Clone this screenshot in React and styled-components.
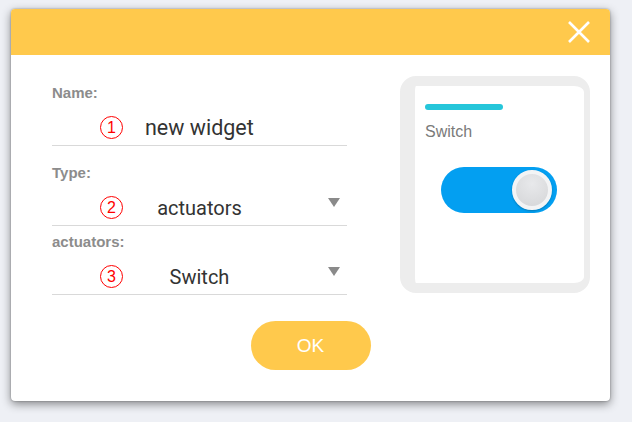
import styled, { createGlobalStyle } from 'styled-components'

const Global = createGlobalStyle`
  html, body {
    margin: 0;
    padding: 0;
    background: #eef0f5;
    font-family: Roboto, "Liberation Sans", Arial, sans-serif;
  }
`

const Marker = ({ n }) => <Badge>{n}</Badge>

const Field = ({ label, marker, value, select, gap }) => (
  <Group gap={gap}>
    <Label>{label}</Label>
    {select ? (
      <SelectBox>
        <Marker n={marker} />
        <span />
        <Value>{value}</Value>
        <Arrow />
      </SelectBox>
    ) : (
      <InputBox>
        <Marker n={marker} />
        <Value large>{value}</Value>
      </InputBox>
    )}
  </Group>
)

const App = () => (
  <>
    <Global />
    <Page>
      <Dialog>
        <Header>
          <Close viewBox="0 0 24 24">
            <path d="M2 2 L22 22 M22 2 L2 22" />
          </Close>
        </Header>
        <Body>
          <Form>
            <Field label="Name:" marker="1" value="new widget" gap={19} />
            <Field label="Type:" marker="2" value="actuators" select gap={8} />
            <Field label="actuators:" marker="3" value="Switch" select gap={0} />
          </Form>
          <Preview>
            <Card>
              <Bar />
              <CardTitle>Switch</CardTitle>
              <Toggle>
                <Knob />
              </Toggle>
            </Card>
          </Preview>
        </Body>
        <Footer>
          <OkButton>OK</OkButton>
        </Footer>
      </Dialog>
    </Page>
  </>
)

export default App

const Page = styled.div`
  width: 632px;
  height: 422px;
  padding: 9px 0 0 11px;
  box-sizing: border-box;
`
const Dialog = styled.div`
  width: 599px;
  height: 392px;
  background: #fff;
  border-radius: 4px;
  overflow: hidden;
  box-shadow: 0 3px 10px rgba(0, 0, 0, 0.45), 0 0 2px rgba(0, 0, 0, 0.35);
`
const Header = styled.div`
  height: 46px;
  background: #ffc94c;
  display: flex;
  align-items: center;
  justify-content: flex-end;
  padding-right: 19px;
`
const Close = styled.svg`
  width: 24px;
  height: 24px;
  fill: none;
  stroke: #fff;
  stroke-width: 2.6;
`
const Body = styled.div`
  display: flex;
  justify-content: space-between;
  padding: 21px 20px 0 41px;
`
const Form = styled.div`
  width: 295px;
  padding-top: 9px;
  display: flex;
  flex-direction: column;
`
const Group = styled.div`
  display: flex;
  flex-direction: column;
  margin-bottom: ${p => p.gap}px;
`
const Label = styled.div`
  font-family: "Liberation Sans", Arial, sans-serif;
  font-size: 15px;
  font-weight: bold;
  line-height: 16px;
  color: #8c8c8c;
`
const InputBox = styled.div`
  position: relative;
  height: 45px;
  box-sizing: border-box;
  border-bottom: 1px solid #d9d9d9;
  display: flex;
  align-items: flex-end;
  padding: 0 0 5px 93px;
`
const SelectBox = styled.div`
  position: relative;
  height: 45px;
  box-sizing: border-box;
  border-bottom: 1px solid #d9d9d9;
  display: grid;
  grid-template-columns: 1fr auto 1fr;
  align-items: end;
  padding-bottom: 5px;
`
const Value = styled.span`
  font-size: ${p => (p.large ? '21.5px' : '20px')};
  line-height: 24px;
  color: #333;
  white-space: nowrap;
`
const Arrow = styled.span`
  justify-self: end;
  align-self: center;
  margin: 4px 7px 0 0;
  width: 0;
  height: 0;
  border-left: 6px solid transparent;
  border-right: 6px solid transparent;
  border-top: 9px solid #8a8a8a;
`
const Badge = styled.span`
  position: absolute;
  left: 48px;
  top: 15px;
  width: 21px;
  height: 21px;
  border: 1.4px solid #f00;
  border-radius: 50%;
  display: flex;
  align-items: center;
  justify-content: center;
  font-family: "Liberation Sans", Arial, sans-serif;
  font-size: 16px;
  color: #f00;
`
const Preview = styled.div`
  width: 190px;
`
const Card = styled.div`
  height: 179px;
  background: #fff;
  border-style: solid;
  border-color: #ededed;
  border-width: 10px 6px 10px 15px;
  border-radius: 16px;
  padding: 18px 10px 0 10px;
  box-sizing: content-box;
  display: flex;
  flex-direction: column;
`
const Bar = styled.div`
  width: 78px;
  height: 6px;
  border-radius: 3px;
  background: #26c6da;
`
const CardTitle = styled.div`
  margin-top: 12px;
  font-family: "Liberation Sans", Arial, sans-serif;
  font-size: 16px;
  line-height: 20px;
  color: #7a7a7a;
`
const Toggle = styled.div`
  margin: 25px 0 0 16px;
  width: 116px;
  height: 46px;
  border-radius: 23px;
  background: #039ff1;
  display: flex;
  align-items: center;
  justify-content: flex-end;
  padding-right: 5px;
  box-sizing: border-box;
`
const Knob = styled.div`
  width: 40px;
  height: 40px;
  border-radius: 50%;
  box-sizing: border-box;
  border: 4px solid #f3f4f5;
  background: radial-gradient(circle at 50% 30%, #e8e9eb, #d4d5d7);
  box-shadow: 0 1px 2px rgba(0, 0, 0, 0.25);
`
const Footer = styled.div`
  display: flex;
  justify-content: center;
  padding-top: 26px;
`
const OkButton = styled.button`
  width: 120px;
  height: 49px;
  border: none;
  border-radius: 25px;
  background: #ffc94c;
  color: #fff;
  font-family: "Liberation Sans", Arial, sans-serif;
  font-size: 19px;
  cursor: pointer;
`
